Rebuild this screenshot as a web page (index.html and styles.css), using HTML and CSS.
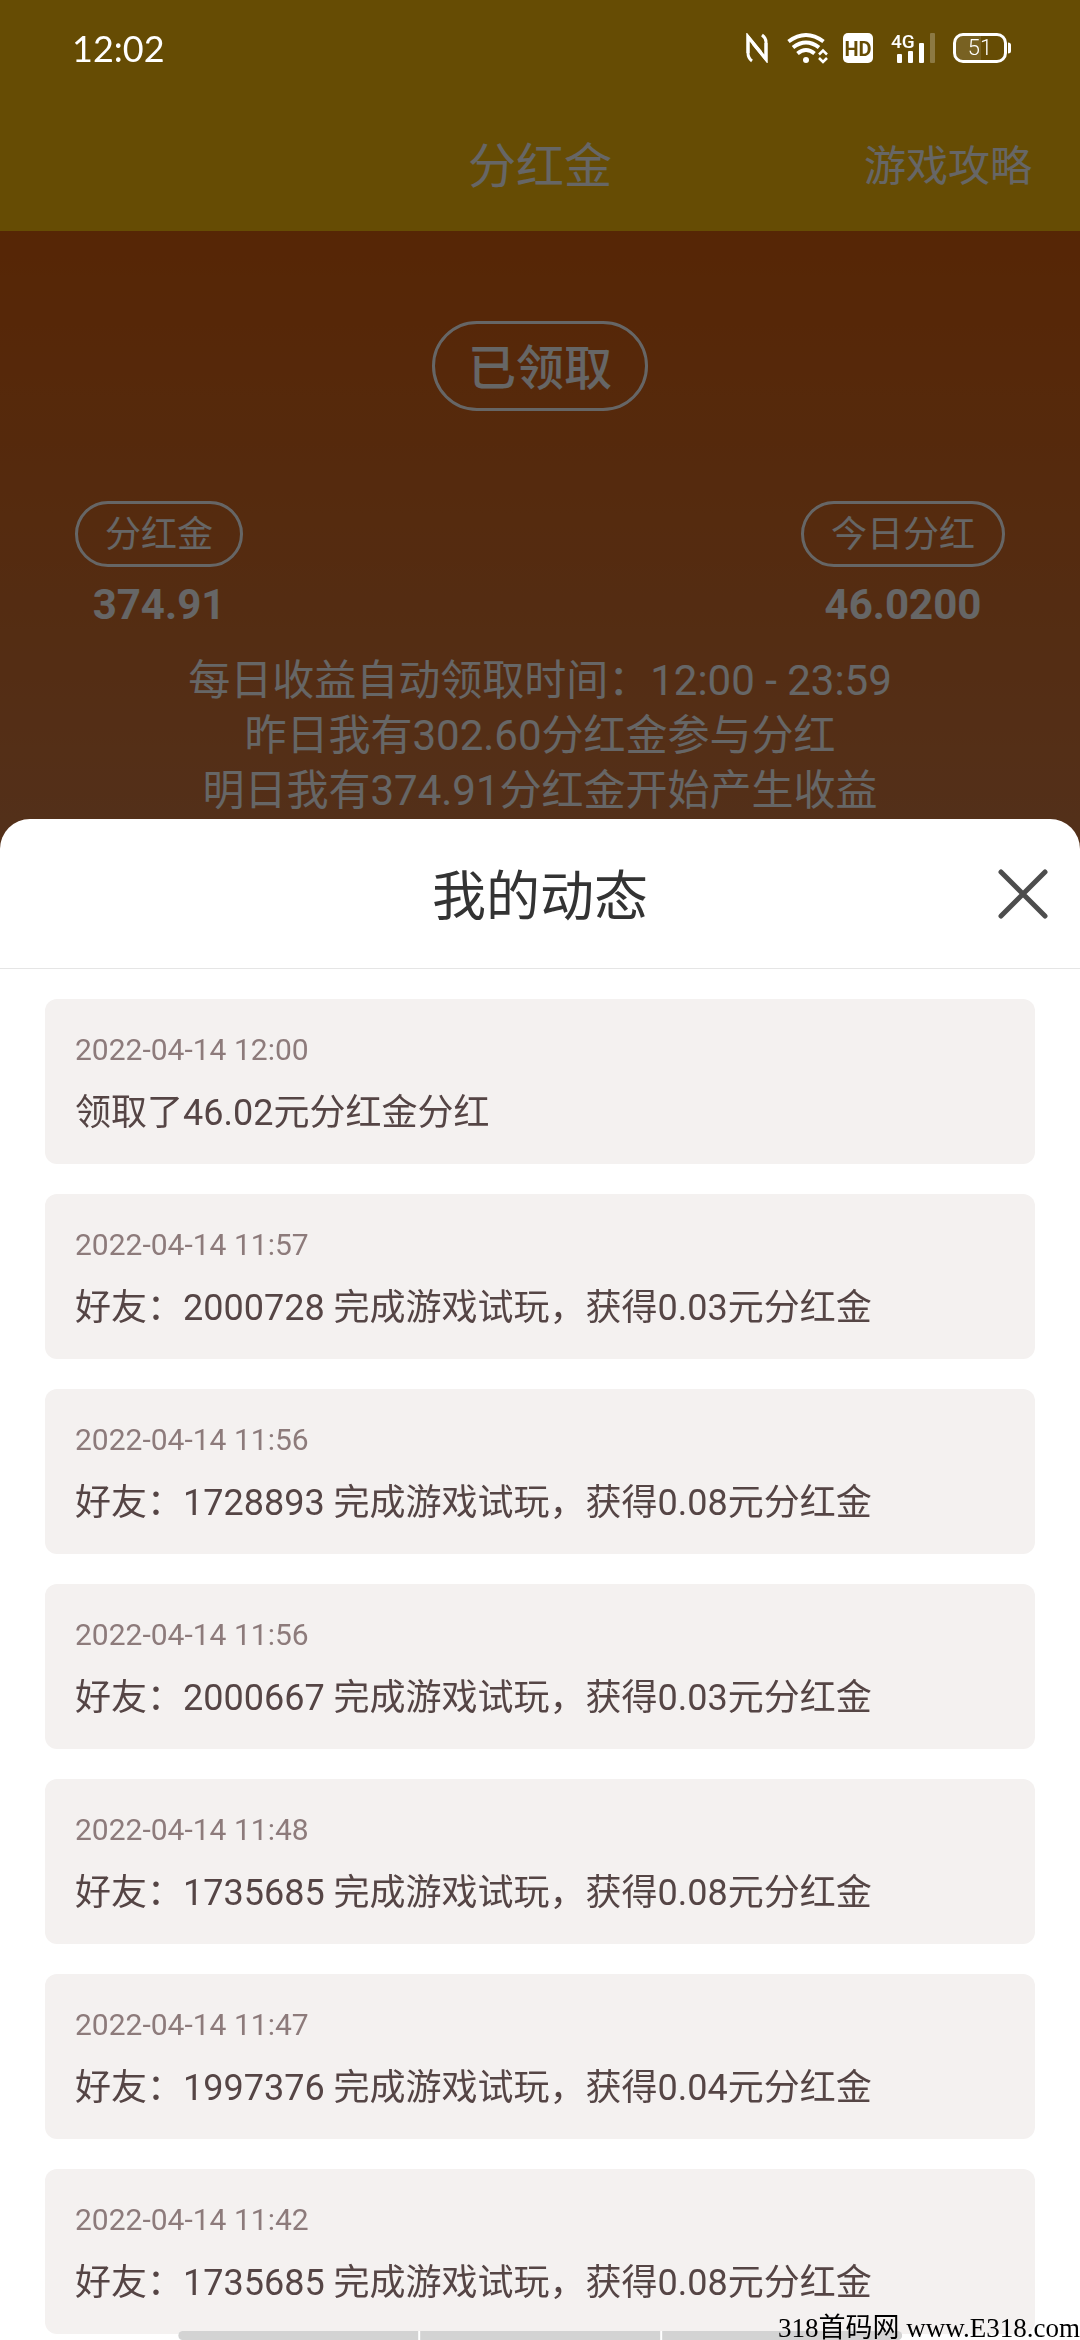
FILE: index.html
```html
<!DOCTYPE html>
<html lang="zh-CN">
<head>
<meta charset="utf-8">
<meta name="viewport" content="width=device-width, initial-scale=1">
<title>分红金</title>
<link rel="stylesheet" href="styles.css">
</head>
<body>
<div class="page">
  <div class="status-bar">
    <span class="clock">12:02</span>
    <div class="status-icons">
      <svg width="23" height="30" viewBox="0 0 23 30" fill="none" stroke="#fff" stroke-width="3">
        <path d="M6 28Q2 25 2 20V4L20 26V9Q20 5 16 2"/>
        <path d="M2 20V3.500L15 19.500M7 10.500L20 26.500V10"/>
      </svg>
      <svg class="wifi" width="38" height="30" viewBox="0 0 38 30" fill="none" stroke="#fff" stroke-width="4">
        <path d="M1.500 8.500Q19 -4.500 36.500 8.500"/>
        <path d="M6 14.500Q19 4.500 32 14.500"/>
        <path d="M10.500 20.500Q19 13.500 27.500 20.500"/>
        <circle cx="19" cy="27" r="3" fill="#fff" stroke="none"/>
        <path d="M32 21.500L36 17.500L40 21.500M32 25L36 29L40 25" stroke-width="2.500"/>
      </svg>
      <svg width="30" height="30" viewBox="0 0 30 30">
        <rect width="30" height="30" rx="5" fill="#fff"/>
        <text class="hd-label" x="15" y="23" text-anchor="middle">HD</text>
      </svg>
      <svg class="signal" width="44" height="30" viewBox="0 0 44 30" fill="#fff">
        <text class="net-label" x="0" y="15">4G</text>
        <rect x="6" y="21" width="5" height="9" rx="1"/>
        <rect x="17" y="18" width="5" height="12" rx="1"/>
        <rect x="28" y="10" width="5" height="20" rx="1"/>
        <rect x="39" y="0" width="5" height="30" rx="1" opacity=".25"/>
      </svg>
      <svg width="58" height="30" viewBox="0 0 58 30">
        <path d="M10 3H28V27H10Q3 27 3 20V10Q3 3 10 3Z" fill="#fff" opacity=".12"/>
        <rect x="1.500" y="1.500" width="51" height="27" rx="8.500" fill="none" stroke="#fff" stroke-width="3"/>
        <path d="M55 9.500Q58 9.500 58 12V18Q58 20.500 55 20.500Z" fill="#fff"/>
        <text class="battery-label" x="27" y="22" text-anchor="middle">51</text>
      </svg>
    </div>
  </div>

  <header class="nav">
    <h1 class="nav-title">分红金</h1>
    <a class="nav-link" href="#guide">游戏攻略</a>
  </header>

  <main class="bonus">
    <button class="claim" type="button">已领取</button>
    <div class="stats">
      <div class="stat">
        <span class="chip">分红金</span>
        <strong class="stat-value">374.91</strong>
      </div>
      <div class="stat">
        <span class="chip">今日分红</span>
        <strong class="stat-value">46.0200</strong>
      </div>
    </div>
    <div class="notes">
      <p>每日收益自动领取时间：12:00 - 23:59</p>
      <p>昨日我有302.60分红金参与分红</p>
      <p>明日我有374.91分红金开始产生收益</p>
    </div>
  </main>
</div>

<div class="mask">
  <section class="sheet" role="dialog" aria-labelledby="sheet-title">
    <div class="sheet-head">
      <h2 class="sheet-title" id="sheet-title">我的动态</h2>
      <button class="close" type="button" aria-label="关闭">
        <svg width="50" height="50" viewBox="0 0 50 50" fill="none" stroke="#4d4d4d" stroke-width="5" stroke-linecap="round">
          <path d="M3 3L47 47M47 3L3 47"/>
        </svg>
      </button>
    </div>
    <ul class="feed">
      <li class="card"><time class="card-time">2022-04-14 12:00</time><p class="card-text">领取了46.02元分红金分红</p></li>
      <li class="card"><time class="card-time">2022-04-14 11:57</time><p class="card-text">好友：2000728 完成游戏试玩，获得0.03元分红金</p></li>
      <li class="card"><time class="card-time">2022-04-14 11:56</time><p class="card-text">好友：1728893 完成游戏试玩，获得0.08元分红金</p></li>
      <li class="card"><time class="card-time">2022-04-14 11:56</time><p class="card-text">好友：2000667 完成游戏试玩，获得0.03元分红金</p></li>
      <li class="card"><time class="card-time">2022-04-14 11:48</time><p class="card-text">好友：1735685 完成游戏试玩，获得0.08元分红金</p></li>
      <li class="card"><time class="card-time">2022-04-14 11:47</time><p class="card-text">好友：1997376 完成游戏试玩，获得0.04元分红金</p></li>
      <li class="card"><time class="card-time">2022-04-14 11:42</time><p class="card-text">好友：1735685 完成游戏试玩，获得0.08元分红金</p></li>
    </ul>
  </section>
</div>

<div class="gesture-bar" aria-hidden="true"><i></i><i></i><i></i></div>
<div class="watermark">318首码网 www.E318.com</div>
</body>
</html>
```
FILE: styles.css
```css
* {
  box-sizing: border-box;
}

body {
  margin: 0;
  font-family: Roboto, "Noto Sans CJK SC", sans-serif;
  background: #ffbe0a;
}

h1, h2, p, ul {
  margin: 0;
  padding: 0;
  font-weight: 400;
}

.page {
  display: flex;
  flex-direction: column;
  height: 100vh;
  overflow: hidden;
  color: #fff;
}

/* Status bar stays bright above the mask */
.status-bar {
  position: relative;
  z-index: 2;
  display: flex;
  justify-content: space-between;
  align-items: center;
  height: 96px;
  padding: 0 69px 0 72px;
}

.clock {
  font-family: Lato, Roboto, sans-serif;
  font-size: 36px;
  line-height: 48px;
}

.status-icons {
  display: flex;
  align-items: center;
  gap: 18px;
}

.wifi, .signal {
  overflow: visible;
}

.hd-label {
  font: 700 20px Roboto, sans-serif;
  fill: #664c04;
}

.net-label {
  font: 500 19px Roboto, sans-serif;
}

.battery-label {
  font: 300 22px Roboto, sans-serif;
  fill: #fff;
}

.nav {
  display: grid;
  grid-template-columns: 1fr auto 1fr;
  align-items: center;
  height: 135px;
  padding: 6px 48px 0;
}

.nav-title {
  grid-column: 2;
  font-size: 48px;
  line-height: 72px;
}

.nav-link {
  justify-self: end;
  font-size: 42px;
  line-height: 72px;
  color: inherit;
  text-decoration: none;
}

.bonus {
  flex: 1;
  display: flex;
  flex-direction: column;
  align-items: center;
  padding-top: 90px;
  background: linear-gradient(#d85f0e 0, #d07840 588px, #c08060 100%);
}

.claim {
  height: 90px;
  padding: 0 33px 4px;
  border: 3px solid #fff;
  border-radius: 45px;
  background: none;
  color: inherit;
  font: 500 48px Roboto, "Noto Sans CJK SC", sans-serif;
}

.stats {
  display: flex;
  justify-content: space-between;
  align-self: stretch;
  margin-top: 90px;
  padding: 0 75px;
}

.stat {
  display: flex;
  flex-direction: column;
  align-items: center;
  gap: 14px;
}

.chip {
  padding: 2px 27px 0;
  border: 3px solid #fff;
  border-radius: 33px;
  font-size: 36px;
  line-height: 58px;
}

.stat-value {
  font-size: 42px;
  line-height: 48px;
}

.notes {
  margin-top: 24px;
  font-size: 42px;
  line-height: 55px;
  text-align: center;
}

.mask {
  position: fixed;
  inset: 0;
  z-index: 1;
  display: flex;
  flex-direction: column;
  justify-content: flex-end;
  background: rgba(0, 0, 0, .6);
}

.sheet {
  display: flex;
  flex-direction: column;
  height: 65vh;
  border-radius: 30px 30px 0 0;
  background: #fff;
}

.sheet-head {
  display: grid;
  grid-template-columns: 1fr auto 1fr;
  align-items: center;
  height: 150px;
  padding: 0 32px;
  border-bottom: 1px solid #e5e5e5;
}

.sheet-title {
  grid-column: 2;
  padding-top: 8px;
  font-size: 54px;
  line-height: 80px;
  color: #333;
}

.close {
  display: flex;
  justify-self: end;
  padding: 0;
  border: 0;
  background: none;
}

.feed {
  flex: 1;
  display: flex;
  flex-direction: column;
  gap: 30px;
  min-height: 0;
  padding: 30px 45px 0;
  overflow-y: auto;
  scrollbar-width: none;
  list-style: none;
}

.card {
  flex: none;
  padding: 30px 30px 24px;
  border-radius: 12px;
  background: #f4f1f0;
}

.card-time {
  display: block;
  font-size: 30px;
  line-height: 42px;
  color: #8d7b7b;
}

.card-text {
  margin-top: 15px;
  font-size: 36px;
  line-height: 54px;
  color: #554545;
}

/* System gesture strip over the bottom edge */
.gesture-bar {
  position: fixed;
  z-index: 3;
  left: 50%;
  bottom: 0;
  display: flex;
  gap: 2px;
  width: 67%;
  height: 9px;
  border-radius: 5px;
  overflow: hidden;
  background: #fff;
  transform: translateX(-50%);
}

.gesture-bar i {
  flex: 1;
  background: #d3d3d3;
}

.watermark {
  position: fixed;
  z-index: 4;
  right: 0;
  bottom: 0;
  font-family: "Liberation Serif", "Noto Sans CJK SC", serif;
  font-size: 27px;
  line-height: 24px;
  color: #000;
}
```
